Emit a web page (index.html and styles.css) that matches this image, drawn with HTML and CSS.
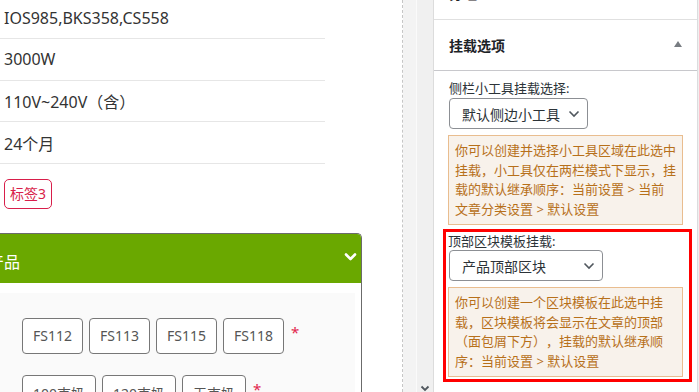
FILE: index.html
```html
<!DOCTYPE html>
<html lang="zh">
<head>
<meta charset="utf-8">
<title>挂载选项</title>
<link rel="stylesheet" href="styles.css">
</head>
<body>
<div class="page">
  <div class="main">
    <div class="rows">
      <div class="row">IOS985,BKS358,CS558</div>
      <div class="row">3000W</div>
      <div class="row">110V~240V（含）</div>
      <div class="row">24个月</div>
    </div>
    <div class="tag-wrap"><span class="tag">标签3</span></div>
    <div class="panel">
      <div class="panel-head">
        <span class="panel-title">产品</span>
        <svg class="head-chev" width="13" height="10" viewBox="0 0 13 10"><path d="M2 2.5 L6.5 7 L11 2.5" fill="none" stroke="#fff" stroke-width="2.6" stroke-linecap="round" stroke-linejoin="round"/></svg>
      </div>
      <div class="panel-body">
        <div class="opts">
          <div class="opt-row">
            <span class="opt">FS112</span>
            <span class="opt">FS113</span>
            <span class="opt">FS115</span>
            <span class="opt">FS118</span>
            <span class="req">*</span>
          </div>
          <div class="opt-row">
            <span class="opt">100克奶</span>
            <span class="opt">120克奶</span>
            <span class="opt">无克奶</span>
            <span class="req">*</span>
          </div>
        </div>
      </div>
    </div>
  </div>
  <div class="gutter">
    <div class="g1"></div>
    <div class="g2">
      <svg class="g-chev" width="10" height="8" viewBox="0 0 10 8"><path d="M1.5 1.5 L5 5 L8.5 1.5" fill="none" stroke="#50575e" stroke-width="1.8"/></svg>
    </div>
  </div>
  <div class="side">
    <div class="s-top">分组</div>
    <div class="s-head">
      <span>挂载选项</span>
      <span class="tri"></span>
    </div>
    <div class="s-body">
      <div class="lbl">侧栏小工具挂载选择:</div>
      <div class="sel sel1">
        <span>默认侧边小工具</span>
        <svg width="12" height="8" viewBox="0 0 12 8"><path d="M1.5 1.5 L6 6 L10.5 1.5" fill="none" stroke="#50575e" stroke-width="1.6"/></svg>
      </div>
      <div class="note">你可以创建并选择小工具区域在此选中挂载，小工具仅在两栏模式下显示，挂载的默认继承顺序：当前设置 &gt; 当前文章分类设置 &gt; 默认设置</div>
      <div class="hl">
        <div class="lbl lbl2">顶部区块模板挂载:</div>
        <div class="sel sel2">
          <span>产品顶部区块</span>
          <svg width="12" height="8" viewBox="0 0 12 8"><path d="M1.5 1.5 L6 6 L10.5 1.5" fill="none" stroke="#50575e" stroke-width="1.6"/></svg>
        </div>
        <div class="note">你可以创建一个区块模板在此选中挂载，区块模板将会显示在文章的顶部（面包屑下方），挂载的默认继承顺序：当前设置 &gt; 默认设置</div>
      </div>
    </div>
  </div>
  <div class="edge"></div>
</div>
</body>
</html>
```

FILE: styles.css
```css
html, body {
  margin: 0;
  padding: 0;
}
body {
  width: 699px;
  height: 392px;
  overflow: hidden;
  background: #fff;
  font-family: "Noto Sans", "Noto Sans CJK SC", sans-serif;
  text-spacing-trim: space-all;
}
.page {
  display: flex;
  height: 392px;
}
.main {
  width: 402px;
  flex: none;
}
.rows {
  width: 325px;
  margin-top: -2.67px;
}
.row {
  height: 41.67px;
  box-sizing: border-box;
  border-bottom: 1px solid #e6e6e6;
  display: flex;
  align-items: center;
  padding-left: 4px;
  font-size: 16px;
  color: #333;
}
.tag-wrap {
  padding: 15px 0 0 4px;
  height: 30px;
}
.tag {
  display: inline-block;
  box-sizing: border-box;
  height: 30px;
  line-height: 28px;
  padding: 0 5px;
  border: 1px solid #d81e4a;
  border-radius: 5px;
  color: #d81e4a;
  font-size: 14px;
}
.panel {
  margin: 24px 0 0 -30px;
  width: 392px;
  box-sizing: border-box;
  border: 1px solid #6b6b6b;
  border-bottom: none;
  border-radius: 0 5px 0 0;
  overflow: hidden;
}
.panel-head {
  height: 49px;
  background: #6aa800;
  display: flex;
  align-items: center;
  justify-content: space-between;
  padding: 0 4px 0 17px;
  color: #fff;
  font-size: 16px;
}
.panel-title {
  padding-top: 5px;
}
.head-chev {
  margin-top: -2px;
}
.panel-body {
  padding: 10px 6px 0 0;
  background: #fff;
}
.opts {
  background: #fafafa;
  padding: 25px 0 20px 51px;
}
.opt-row {
  display: flex;
  align-items: center;
  gap: 6px;
  margin-bottom: 21px;
}
.opt {
  display: inline-flex;
  align-items: center;
  height: 36px;
  box-sizing: border-box;
  border: 1px solid #777;
  border-radius: 4px;
  padding: 0 10px;
  font-size: 14px;
  color: #555;
  background: #fff;
}
.req {
  color: #e2264d;
  font-size: 15px;
  margin-left: 1px;
  align-self: flex-start;
  margin-top: 4px;
}
.gutter {
  flex: none;
  display: flex;
  border-left: 1px dashed #c6c6c6;
  border-right: 1px solid #dcdcdc;
  height: 392px;
}
.g1 {
  width: 13px;
  background: #f3f3f3;
  border-right: 1px solid #fafafa;
}
.g2 {
  width: 16px;
  background: #f0f0f0;
  display: flex;
  align-items: flex-end;
  justify-content: center;
}
.g-chev {
  margin-bottom: -1px;
}
.side {
  flex: none;
  width: 264px;
  box-sizing: border-box;
  border-right: 1px solid #dcdcde;
  background: #fff;
  color: #1d2327;
}
.edge {
  flex: 1;
  background: #f0f0f0;
}
.s-top {
  height: 49px;
  margin-top: -29px;
  box-sizing: border-box;
  border-bottom: 1px solid #e0e0e0;
  display: flex;
  align-items: center;
  padding: 0 0 5px 15px;
  font-size: 14px;
  font-weight: bold;
}
.s-head {
  height: 51px;
  box-sizing: border-box;
  border-bottom: 1px solid #c8c8cc;
  display: flex;
  align-items: center;
  justify-content: space-between;
  padding: 0 15px 0 15px;
  font-size: 14px;
  font-weight: bold;
}
.tri {
  width: 0;
  height: 0;
  border-left: 4px solid transparent;
  border-right: 4px solid transparent;
  border-bottom: 6px solid #787c82;
  margin-top: -3px;
}
.s-body {
  padding: 8px 0 0 14px;
}
.lbl {
  font-size: 13px;
  line-height: 18px;
  color: #2c3338;
  margin-left: 1px;
}
.lbl2 {
  line-height: 17px;
  margin-left: 0;
}
.sel {
  margin: 1px 0 0 1px;
  height: 31px;
  box-sizing: border-box;
  border: 1px solid #8c8f94;
  border-radius: 4px;
  display: flex;
  align-items: center;
  justify-content: space-between;
  padding: 0 7px 0 12px;
  font-size: 14px;
  color: #2c3338;
  background: #fff;
}
.sel1 {
  width: 139px;
}
.sel2 {
  width: 154px;
  margin-top: 0;
}
.note {
  margin-top: 6px;
  width: 235px;
  box-sizing: border-box;
  border: 1px solid #e9bd8f;
  background: #f8f2eb;
  color: #b7701a;
  font-size: 13px;
  line-height: 19.5px;
  padding: 5px 5px 5px 6px;
  text-spacing-trim: space-all;
}
.hl {
  margin: 4px 0 0 -5px;
  width: 249px;
  box-sizing: border-box;
  border: 3px solid #f00;
  padding: 1px 6px 2px 2px;
}
```
